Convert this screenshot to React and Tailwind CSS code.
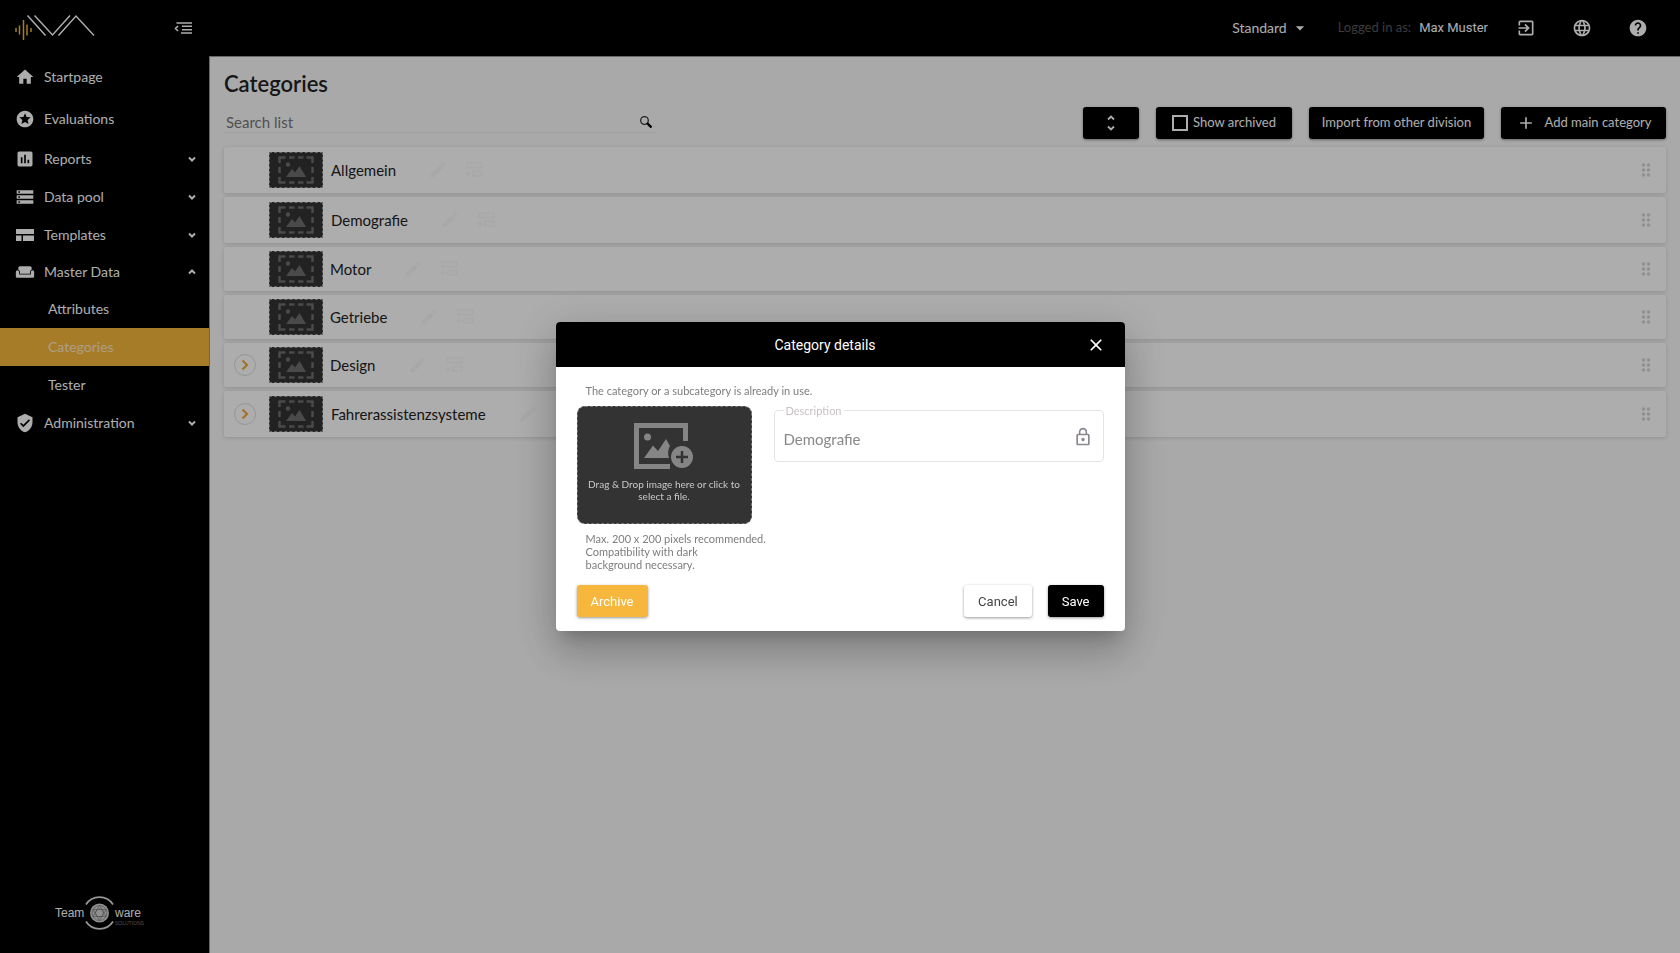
import React from 'react';
import {
  MdHome,
  MdStars,
  MdAssessment,
  MdStorage,
  MdWeekend,
  MdVerifiedUser,
  MdExitToApp,
  MdLanguage,
  MdHelp,
  MdArrowDropDown,
  MdLockOutline,
  MdEdit,
  MdDragIndicator,
  MdClose,
  MdAdd,
} from 'react-icons/md';

function BrandLogo() {
  return (
    <svg width="82" height="28" viewBox="0 0 82 28" fill="none" role="img" aria-label="IVA">
      <g stroke="#f6b73c" strokeWidth="1.5">
        <path d="M2 14v4M5.500 11.500v9M9.500 6v20M13 10.500v11M17 14v4" />
      </g>
      <g stroke="#fff" strokeWidth="1.5">
        <path d="M13.500 1.500 31.500 21.500M20.500 1.500 38.500 21 56 1.500M44.500 21.500 62 2 80 21.500" />
      </g>
    </svg>
  );
}

function CollapseIcon() {
  return (
    <svg width="18" height="14" viewBox="0 0 18 14" fill="none" stroke="#fff" strokeWidth="1.600">
      <path d="M2.500 2H18M8 5.300h10M8 8.700h10M7 12h11M4 5 1.500 7.500 4 10" />
    </svg>
  );
}

function TemplatesIcon() {
  return (
    <svg width="18" height="14" viewBox="0 0 18 14" fill="currentColor">
      <path d="M0 1h18v5H0zM0 7.500h5.500V13H0zM7 7.500h11V13H7z" />
    </svg>
  );
}

function Chevron({ up }) {
  return (
    <svg width="8" height="6" viewBox="0 0 8 6" fill="none" stroke="#fff" strokeWidth="2">
      <path d={up ? 'M1 4.500 4 1.500 7 4.500' : 'M1 1.500 4 4.500 7 1.500'} />
    </svg>
  );
}

function CompanyLogo() {
  return (
    <svg width="90" height="36" viewBox="0 0 90 36" fill="none" role="img" aria-label="Teamware Solutions">
      <text x="0" y="22" fill="#fff" fontSize="12" fontFamily='"Liberation Sans", sans-serif'>Team</text>
      <text x="60" y="22" fill="#fff" fontSize="12" fontFamily='"Liberation Sans", sans-serif'>ware</text>
      <text x="60" y="30" fill="#777" fontSize="5" fontFamily='"Liberation Sans", sans-serif'>SOLUTIONS</text>
      <path d="M31 9.500a16 16 0 0 1 27 0M31 26.500a16 16 0 0 0 27 0" stroke="#ddd" strokeWidth="1.800" />
      <circle cx="44.500" cy="18" r="9.500" fill="#d4d4d4" />
      <g stroke="#777" strokeWidth="0.700">
        <circle cx="44.500" cy="18" r="7.500" />
        <circle cx="44.500" cy="18" r="4" />
        <path d="M44.500 10.500 51 21.500H38zM44.500 25.500 38 14.500h13z" />
      </g>
    </svg>
  );
}

function PlaceholderThumb() {
  return (
    <span className="flex h-9 w-[54px] shrink-0 items-center justify-center border border-dashed border-[#999] bg-[#333]">
      <svg width="36" height="28" viewBox="0 0 36 28" fill="none">
        <path
          d="M1.500 7V1.500H7.500M11 1.500h5.500M20 1.500h5.500M28.500 1.500h6V7M34.500 11v6M34.500 21v5.500h-6M25.500 26.500H20M16.500 26.500H11M7.500 26.500h-6V21M1.500 17v-6"
          stroke="#6e6e6e"
          strokeWidth="2.500"
        />
        <circle cx="10" cy="8.500" r="2.200" fill="#6e6e6e" />
        <path d="M8 21 14 13l3 3.500L21.500 10 28 21z" fill="#6e6e6e" />
      </svg>
    </span>
  );
}

function AddImageIcon() {
  return (
    <svg width="60" height="46" viewBox="0 0 60 46" fill="none">
      <path d="M36 43.500H2.500V2.500h49V18" stroke="#858585" strokeWidth="5" />
      <circle cx="13.500" cy="14" r="3.500" fill="#858585" />
      <path d="M10 35 19 22.500l5 5.500 8-12 4 7c-2 3-2.500 8-1 12z" fill="#858585" />
      <circle cx="48" cy="34" r="11" fill="#858585" />
      <path d="M48 28v12M42 34h12" stroke="#333" strokeWidth="2.500" />
    </svg>
  );
}

function AddChildIcon() {
  return (
    <svg width="20" height="18" viewBox="0 0 20 18" fill="none" stroke="currentColor" strokeWidth="1.500">
      <path d="M3 2h15v4.500H3zM9 10.500h9V15H9zM1 13h6M4 10v6" />
    </svg>
  );
}

const navClass = 'flex items-center gap-[9px] pl-[15px] pr-[13px] w-full text-left text-white';

function NavItem({ icon, label, height, caret }) {
  const inner = (
    <>
      <span className="flex w-5 justify-center">{icon}</span>
      <span className="flex-1">{label}</span>
      {caret && <Chevron up={caret === 'up'} />}
    </>
  );
  return (
    <li>
      {caret ? (
        <button type="button" aria-expanded={caret === 'up'} className={navClass + ' ' + height}>{inner}</button>
      ) : (
        <a href="#" className={navClass + ' ' + height}>{inner}</a>
      )}
    </li>
  );
}

function SubItem({ label, active }) {
  return (
    <li>
      <a
        href="#"
        aria-current={active ? 'page' : undefined}
        className={'flex h-[38px] items-center pl-12 ' + (active ? 'bg-[#f6b73c] text-[#ffe9c4]' : 'text-white')}
      >
        {label}
      </a>
    </li>
  );
}

function Sidebar() {
  return (
    <nav className="flex w-[210px] shrink-0 flex-col border-r border-[#999] bg-black text-sm leading-5">
      <ul>
        <NavItem height="h-[42px]" icon={<MdHome size={20} />} label="Startpage" />
        <NavItem height="h-[42px]" icon={<MdStars size={20} />} label="Evaluations" />
        <NavItem height="h-[38px]" icon={<MdAssessment size={20} />} label="Reports" caret="down" />
        <NavItem height="h-[38px]" icon={<MdStorage size={20} />} label="Data pool" caret="down" />
        <NavItem height="h-[37px]" icon={<TemplatesIcon />} label="Templates" caret="down" />
        <NavItem height="h-[37px]" icon={<MdWeekend size={20} />} label="Master Data" caret="up" />
        <SubItem label="Attributes" />
        <SubItem label="Categories" active />
        <SubItem label="Tester" />
        <NavItem height="h-[37px]" icon={<MdVerifiedUser size={20} />} label="Administration" caret="down" />
      </ul>
      <div className="mt-auto flex justify-center pr-[10px] pb-[22px]">
        <CompanyLogo />
      </div>
    </nav>
  );
}

function TopBar() {
  return (
    <header className="flex h-14 items-center bg-black text-white">
      <div className="flex w-[210px] items-center justify-between pl-[14px] pr-[18px]">
        <BrandLogo />
        <button type="button" aria-label="Collapse menu"><CollapseIcon /></button>
      </div>
      <div className="ml-auto flex items-center pr-8 text-[13px]">
        <button type="button" className="flex items-center gap-[3px] text-sm">
          Standard
          <MdArrowDropDown size={20} />
        </button>
        <span className="ml-7 text-[#5a5a5a]">Logged in as:</span>
        <span className="ml-2 font-[Roboto,sans-serif]">Max Muster</span>
        <div className="ml-7 flex gap-9">
          <button type="button" aria-label="Log out"><MdExitToApp size={20} /></button>
          <button type="button" aria-label="Language"><MdLanguage size={20} /></button>
          <button type="button" aria-label="Help"><MdHelp size={20} /></button>
        </div>
      </div>
    </header>
  );
}

const barButton = 'flex h-8 items-center justify-center rounded-[3px] bg-black px-3 text-[13px] whitespace-nowrap text-white shadow-[0_1px_3px_rgba(0,0,0,0.4)]';

function Toolbar() {
  return (
    <div className="flex items-start justify-between">
      <div className="flex h-[26px] w-[432px] items-end border-b border-[#ebebeb] pr-1 pl-[2px]">
        <input aria-label="Search list" placeholder="Search list" className="h-5 min-w-0 flex-1 bg-transparent text-[15px] leading-5 outline-none placeholder:text-[#777]" />
        <svg className="mb-1" width="12" height="12" viewBox="0 0 12 12" fill="none" stroke="#000">
          <circle cx="4.500" cy="4.500" r="3.800" strokeWidth="1.300" stroke="#333" />
          <path d="M7 7l4.500 4.500" strokeWidth="2.400" />
        </svg>
      </div>
      <div className="flex gap-[17px]">
        <button type="button" aria-label="Expand all" className={barButton + ' w-14'}>
          <svg width="8" height="16" viewBox="0 0 8 16" fill="none" stroke="#fff" strokeWidth="1.800">
            <path d="M1 4.500 4 1.500 7 4.500M1 11.500 4 14.500 7 11.500" />
          </svg>
        </button>
        <label className={barButton + ' w-[136px] gap-[5px]'}>
          <input type="checkbox" className="size-4 appearance-none border-2 border-white" />
          Show archived
        </label>
        <button type="button" className={barButton + ' w-[175px]'}>Import from other division</button>
        <button type="button" className={barButton + ' w-[165px] gap-[9px]'}>
          <MdAdd size={20} />
          Add main category
        </button>
      </div>
    </div>
  );
}

const categories = [
  { name: 'Allgemein', big: true },
  { name: 'Demografie', big: true },
  { name: 'Motor' },
  { name: 'Getriebe' },
  { name: 'Design', children: true },
  { name: 'Fahrerassistenzsysteme', children: true, big: true },
];

function CategoryRow({ item }) {
  return (
    <li className={'flex items-center rounded-[2px] bg-white px-[10px] shadow-[0_1px_4px_rgba(0,0,0,0.16)] ' + (item.big ? 'h-[46px]' : 'h-11')}>
      <span className="flex w-[35px] items-center">
        {item.children && (
          <button type="button" aria-label={'Expand ' + item.name} className="flex size-[22px] items-center justify-center rounded-full border border-[#ddd]">
            <svg width="8" height="12" viewBox="0 0 8 12" fill="none" stroke="#f6a93c" strokeWidth="2.200">
              <path d="M1.500 1.500 6 6 1.500 10.500" />
            </svg>
          </button>
        )}
      </span>
      <PlaceholderThumb />
      <span className={'text-[15px] text-[#222] ' + (item.big ? 'ml-2' : 'ml-[7px]')}>{item.name}</span>
      <button type="button" aria-label={'Edit ' + item.name} className="ml-8 text-[#f8f8f8]"><MdEdit size={20} /></button>
      <button type="button" aria-label={'Add subcategory to ' + item.name} className="ml-4 text-[#f8f8f8]"><AddChildIcon /></button>
      <MdDragIndicator size={20} className="ml-auto text-[#d4d4d4]" />
    </li>
  );
}

function CategoryDialog() {
  const action = 'h-8 rounded-[3px] px-[14px] font-[Roboto,sans-serif] text-[13px] shadow-[0_1px_3px_rgba(0,0,0,0.4)]';
  return (
    <div className="fixed inset-0 z-10 flex items-center justify-center bg-black/32">
      <section
        role="dialog"
        aria-modal="true"
        aria-labelledby="dialog-title"
        className="w-[569px] overflow-hidden rounded-[4px] bg-white shadow-[0_11px_15px_-7px_rgba(0,0,0,0.2),0_24px_38px_3px_rgba(0,0,0,0.14),0_9px_46px_8px_rgba(0,0,0,0.12)]"
      >
        <div className="flex h-[45px] items-center bg-black px-[14px] text-white">
          <h2 id="dialog-title" className="flex-1 text-center font-[Roboto,sans-serif] text-sm">Category details</h2>
          <button type="button" aria-label="Close" className="flex w-[30px] justify-center"><MdClose size={20} /></button>
        </div>
        <div className="px-[21px] pt-4 pb-[14px] text-[11px] leading-[13px] text-[#7d7d7d]">
          <p className="px-[9px] leading-4">The category or a subcategory is already in use.</p>
          <div className="mt-[7px] flex items-start gap-[22px]">
            <div className="w-[175px] shrink-0">
              <button type="button" className="flex h-[118px] w-full flex-col items-center rounded-lg border border-dashed border-[#777] bg-[#333] px-2 pt-4 text-[10px] leading-3 text-[#c9c9c9]">
                <AddImageIcon />
                <span className="mt-[9px]">
                  Drag &amp; Drop image here or click to
                  <br />select a file.
                </span>
              </button>
              <p className="mt-2 pl-[9px]">
                <span className="whitespace-nowrap">Max. 200 x 200 pixels recommended.</span>
                <br />Compatibility with dark
                <br />background necessary.
              </p>
            </div>
            <fieldset className="-mt-[2px] h-[58px] min-w-0 flex-1 rounded-[4px] border border-[#e4e4e4] pr-[10px] pl-[9px]">
              <legend className="px-[2px] text-[11px] leading-[13px] text-[#c8c2c6]">
                <label htmlFor="description">Description</label>
              </legend>
              <div className="flex h-10 items-center">
                <input id="description" disabled defaultValue="Demografie" className="h-10 min-w-0 flex-1 bg-transparent pt-1 text-[15px] text-[#888]" />
                <MdLockOutline size={20} className="text-[#8a8590]" />
              </div>
            </fieldset>
          </div>
          <div className="mt-[14px] flex">
            <button type="button" className={action + ' bg-[#f6b73c] text-white'}>Archive</button>
            <button type="button" className={action + ' ml-auto bg-white text-[#444]'}>Cancel</button>
            <button type="button" className={action + ' ml-4 bg-black text-white'}>Save</button>
          </div>
        </div>
      </section>
    </div>
  );
}

export default function App() {
  return (
    <div className="flex min-h-screen flex-col bg-[#fafafa] font-[Lato,sans-serif] text-[#222]">
      <TopBar />
      <div className="flex flex-1">
        <Sidebar />
        <main className="min-w-0 flex-1 border-t border-[#999] px-[14px] pt-[11px]">
          <h1 className="text-[22px] leading-8 font-semibold">Categories</h1>
          <div className="mt-[7px]"><Toolbar /></div>
          <ul className="mt-2 flex flex-col gap-1">
            {categories.map((item) => <CategoryRow key={item.name} item={item} />)}
          </ul>
        </main>
      </div>
      <CategoryDialog />
    </div>
  );
}
